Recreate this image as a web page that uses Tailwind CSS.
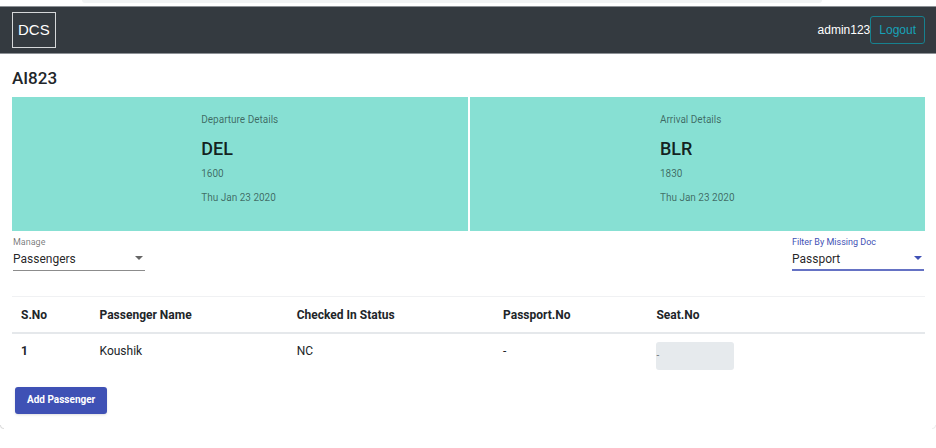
<!DOCTYPE html>
<html lang="en">
<head>
<meta charset="utf-8">
<meta name="viewport" content="width=device-width, initial-scale=1">
<title>DCS</title>
<script src="https://cdn.jsdelivr.net/npm/@tailwindcss/browser@4"></script>
</head>
<body class="bg-white font-[Roboto,sans-serif] text-xs text-[#212529]">
  <div class="flex h-[6px] items-start px-[82px]"><div class="h-[3px] w-full max-w-[740px] rounded-b-sm bg-[#f1f3f4]"></div></div>
  <header class="flex h-[48px] items-center justify-between border-y border-[#8d9196] bg-[#343a40] pr-[11px] pl-3 font-['Liberation_Sans',Arial,sans-serif]">
    <a href="#" class="flex h-[36px] items-center border border-[#d5d7d9] px-[5px] text-[15px] text-white">DCS</a>
    <div class="flex items-center">
      <span class="text-xs text-white">admin123</span>
      <button type="button" class="h-[28px] rounded-[3px] border border-[#17818f] px-2 text-xs text-[#17a2b8]">Logout</button>
    </div>
  </header>

  <main class="pr-[11px] pl-3">
    <h1 class="pt-3 pb-[7px] text-[17px] leading-6 font-medium">AI823</h1>

    <section class="grid grid-cols-2 gap-[2px]">
      <article class="flex h-[134px] justify-center bg-[#87e0d3] pt-4">
        <div class="text-[10px] leading-[14px] text-black/54">
          <p>Departure Details</p>
          <h2 class="mt-[10px] mb-[6px] text-lg leading-6 font-medium text-black/87">DEL</h2>
          <p>1600</p>
          <p class="mt-[10px]">Thu Jan 23 2020</p>
        </div>
      </article>
      <article class="flex h-[134px] justify-center bg-[#87e0d3] pt-4">
        <div class="text-[10px] leading-[14px] text-black/54">
          <p>Arrival Details</p>
          <h2 class="mt-[10px] mb-[6px] text-lg leading-6 font-medium text-black/87">BLR</h2>
          <p>1830</p>
          <p class="mt-[10px]">Thu Jan 23 2020</p>
        </div>
      </article>
    </section>

    <section class="flex justify-between px-px pt-1">
      <div class="w-[132px]">
        <label for="manage" class="block text-[9px] leading-[14px] text-black/54">Manage</label>
        <div class="relative">
          <select id="manage" class="block h-[22px] w-full appearance-none border-b border-[#8c8c8c] pb-px text-xs text-black/87 outline-none"><option>Passengers</option></select>
          <svg class="pointer-events-none absolute top-[7px] right-[2px] h-1 w-2" viewBox="0 0 8 4" fill="#666"><path d="M0 0h8L4 4z"/></svg>
        </div>
      </div>
      <div class="w-[132px]">
        <label for="filter" class="block text-[9px] leading-[14px] text-[#3f51b5]">Filter By Missing Doc</label>
        <div class="relative">
          <select id="filter" class="block h-[22px] w-full appearance-none border-b-2 border-[#6572c4] text-xs text-black/87 outline-none"><option>Passport</option></select>
          <svg class="pointer-events-none absolute top-[7px] right-[2px] h-1 w-2" viewBox="0 0 8 4" fill="#3f51b5"><path d="M0 0h8L4 4z"/></svg>
        </div>
      </div>
    </section>

    <table class="mt-[25px] w-full table-fixed border-collapse text-left">
      <colgroup><col class="w-[8.6%]"><col class="w-[21.6%]"><col class="w-[22.6%]"><col class="w-[16.8%]"><col></colgroup>
      <thead>
        <tr class="h-[36px] border-t border-b-2 border-t-[#f0f1f3] border-b-[#e5e8eb]">
          <th scope="col" class="px-[9px] pt-px font-bold">S.No</th>
          <th scope="col" class="px-[9px] pt-px font-bold">Passenger Name</th>
          <th scope="col" class="px-[9px] pt-px font-bold">Checked In Status</th>
          <th scope="col" class="px-[9px] pt-px font-bold">Passport.No</th>
          <th scope="col" class="px-[9px] pt-px font-bold">Seat.No</th>
        </tr>
      </thead>
      <tbody>
        <tr class="align-top">
          <th scope="row" class="px-[9px] pt-[9px] font-bold">1</th>
          <td class="px-[9px] pt-[9px]">Koushik</td>
          <td class="px-[9px] pt-[9px]">NC</td>
          <td class="px-[9px] pt-[9px]">-</td>
          <td class="px-[9px] pt-2"><input type="text" aria-label="Seat number" value="-" disabled class="block h-[28px] w-[78px] rounded-[3px] bg-[#e6eaed] text-[10px] text-[#6c757d]"></td>
        </tr>
      </tbody>
    </table>

    <button type="button" class="mt-[17px] ml-[3px] h-[27px] rounded-[3px] bg-[#3f51b5] px-3 text-[10px] font-bold text-white shadow">Add Passenger</button>
  </main>
  <footer class="mt-[11px] flex justify-between">
    <span class="h-1 w-1 rounded-bl border-b border-l border-[#dddddd]"></span>
    <span class="h-1 w-1 rounded-br border-r border-b border-[#eeeeee]"></span>
  </footer>
</body>
</html>
